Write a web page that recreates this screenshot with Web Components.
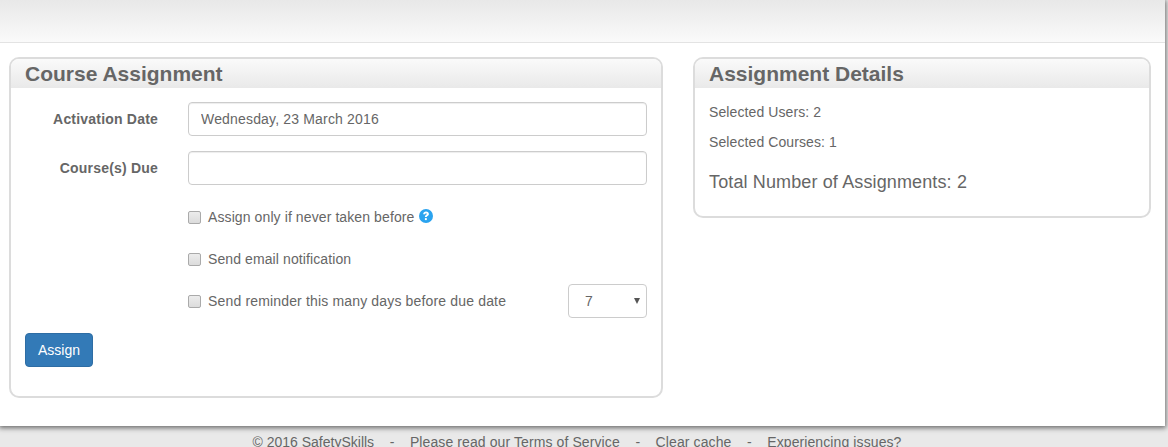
<!DOCTYPE html>
<html>
<head>
<meta charset="utf-8">
<title>Course Assignment</title>
<style>
html, body { margin: 0; height: 100%; overflow: hidden; background: #e9e9e9; }
body { font-family: "Liberation Sans", Arial, sans-serif; font-size: 14px; color: #666; }
</style>
</head>
<body>
<assign-page>
  <info-panel slot="left" heading="Course Assignment">
    <assign-form></assign-form>
  </info-panel>
  <info-panel slot="right" heading="Assignment Details">
    <assign-details></assign-details>
  </info-panel>
</assign-page>
<site-footer></site-footer>

<script>
class AssignPage extends HTMLElement {
    constructor() {
        super();
        this.shadowDOM = this.attachShadow({mode: "open"});
    }

    connectedCallback() {
        this.shadowDOM.innerHTML = `
        <style>
        :host {
            display: block;
            width: 1165px;
            height: 426px;
            background: #fff;
            box-shadow: 0 1px 5px 1px rgba(0,0,0,.55);
        }
        .top {
            height: 42px;
            border-bottom: 1px solid #e3e3e3;
            background: linear-gradient(#e8e8e8, #fafafa);
        }
        .cols {
            display: grid;
            grid-template-columns: 654px 458px;
            column-gap: 30px;
            align-items: start;
            padding: 14px 0 0 9px;
        }
        </style>
        <div class="top"></div>
        <div class="cols">
            <slot name="left"></slot>
            <slot name="right"></slot>
        </div>`;
    }
}

class InfoPanel extends HTMLElement {
    constructor() {
        super();
        this.shadowDOM = this.attachShadow({mode: "open"});
    }

    connectedCallback() {
        this.shadowDOM.innerHTML = `
        <style>
        :host {
            display: block;
            border: 2px solid #dcdcdc;
            border-radius: 10px;
            overflow: hidden;
            background: #fff;
        }
        h2 {
            margin: 0;
            height: 29px;
            padding-left: 14px;
            font-size: 21px;
            line-height: 29px;
            font-weight: bold;
            color: #666;
            background: linear-gradient(#fafafa, #e9e9e9);
        }
        </style>
        <h2>${this.getAttribute("heading")}</h2>
        <slot></slot>`;
    }
}

class AssignForm extends HTMLElement {
    constructor() {
        super();
        this.shadowDOM = this.attachShadow({mode: "open"});
    }

    connectedCallback() {
        this.shadowDOM.innerHTML = `
        <style>
        :host {
            display: block;
            height: 308px;
            padding: 14px 14px 0 14px;
            box-sizing: border-box;
        }
        .row {
            display: grid;
            grid-template-columns: 133px 1fr;
            column-gap: 30px;
            align-items: center;
            height: 34px;
            margin-bottom: 15px;
        }
        label {
            text-align: right;
            font-weight: bold;
            letter-spacing: .2px;
        }
        input[type=text] {
            box-sizing: border-box;
            width: 100%;
            height: 34px;
            padding: 0 12px;
            border: 1px solid #ccc;
            border-radius: 4px;
            font: inherit;
            letter-spacing: .17px;
            color: #666;
            box-shadow: inset 0 1px 1px rgba(0,0,0,.075);
        }
        .checks {
            display: flex;
            flex-direction: column;
            gap: 8px;
            margin-left: 163px;
        }
        .check {
            display: flex;
            align-items: center;
            height: 34px;
            letter-spacing: .1px;
        }
        .check .long { letter-spacing: .16px; }
        .check input {
            appearance: none;
            box-sizing: border-box;
            width: 13px;
            height: 13px;
            margin: 0 7px 0 0;
            border: 1px solid #aaa;
            border-radius: 2px;
            background: linear-gradient(#ececec, #dcdcdc);
        }
        .help { margin: 0 0 2px 5px; }
        .fake-select {
            position: relative;
            box-sizing: border-box;
            width: 79px;
            height: 34px;
            margin-left: auto;
            padding-left: 16px;
            border: 1px solid #ccc;
            border-radius: 4px;
            line-height: 32px;
        }
        .fake-select::after {
            content: "";
            position: absolute;
            right: 6px;
            top: 13px;
            border: 3.5px solid transparent;
            border-top: 6px solid #555;
            border-bottom: 0;
        }
        button {
            display: block;
            box-sizing: border-box;
            width: 68px;
            height: 34px;
            margin-top: 15px;
            padding: 0;
            border: 1px solid #2e6da4;
            border-radius: 4px;
            background: #337ab7;
            color: #fff;
            font: inherit;
        }
        </style>
        <div class="row">
            <label>Activation Date</label>
            <input type="text" value="Wednesday, 23 March 2016">
        </div>
        <div class="row">
            <label>Course(s) Due</label>
            <input type="text">
        </div>
        <div class="checks">
            <div class="check">
                <input type="checkbox"><span>Assign only if never taken before</span>
                <svg class="help" width="14" height="14" viewBox="0 0 14 14">
                    <circle cx="7" cy="7" r="7" fill="#2aa3ef"/>
                    <path d="M4.2 5.3C4.2 3.7 5.5 2.6 7.1 2.6s2.8 1 2.8 2.4c0 1.1-.7 1.7-1.4 2.1-.5.3-.7.5-.7 1H5.9c0-1.1.3-1.6 1-2.1.5-.3.9-.6.9-1 0-.4-.3-.7-.8-.7s-.8.4-.8 1z" fill="#fff"/>
                    <rect x="5.9" y="9.1" width="1.9" height="2" fill="#fff"/>
                </svg>
            </div>
            <div class="check">
                <input type="checkbox"><span>Send email notification</span>
            </div>
            <div class="check">
                <input type="checkbox"><span class="long">Send reminder this many days before due date</span>
                <div class="fake-select">7</div>
            </div>
        </div>
        <button type="button">Assign</button>`;
    }
}

class AssignDetails extends HTMLElement {
    constructor() {
        super();
        this.shadowDOM = this.attachShadow({mode: "open"});
    }

    connectedCallback() {
        this.shadowDOM.innerHTML = `
        <style>
        :host {
            display: block;
            height: 128px;
            padding: 14px 14px 0 14px;
            box-sizing: border-box;
        }
        p {
            margin: 0 0 10px;
            line-height: 20px;
            letter-spacing: .1px;
        }
        .total {
            margin-top: 20px;
            font-size: 18px;
            letter-spacing: .13px;
        }
        </style>
        <p>Selected Users: 2</p>
        <p>Selected Courses: 1</p>
        <p class="total">Total Number of Assignments: 2</p>`;
    }
}

class SiteFooter extends HTMLElement {
    constructor() {
        super();
        this.shadowDOM = this.attachShadow({mode: "open"});
    }

    connectedCallback() {
        this.shadowDOM.innerHTML = `
        <style>
        :host {
            display: flex;
            justify-content: center;
            width: 1154px;
            padding-top: 6px;
            white-space: pre;
            line-height: 20px;
        }
        .wide { letter-spacing: .1px; }
        </style>
        <span>© 2016 SafetySkills    -    <span class="wide">Please read our Terms of Service</span>    -    <span class="wide">Clear cache</span>    -    <span class="wide">Experiencing issues?</span></span>`;
    }
}

customElements.define("assign-page", AssignPage);
customElements.define("info-panel", InfoPanel);
customElements.define("assign-form", AssignForm);
customElements.define("assign-details", AssignDetails);
customElements.define("site-footer", SiteFooter);
</script>
</body>
</html>
